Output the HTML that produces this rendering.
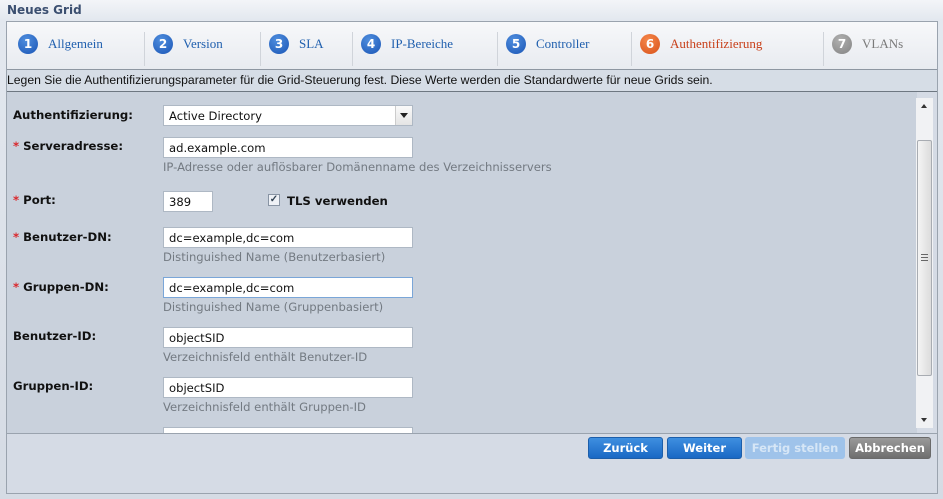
<!DOCTYPE html>
<html><head><meta charset="utf-8"><style>
*{box-sizing:border-box;margin:0;padding:0}
body{width:943px;height:499px;overflow:hidden;background:linear-gradient(#f3f5f8,#e3e8ef 20px,#d5dbe4);font-family:"Liberation Sans",sans-serif;position:relative}
.abs{position:absolute}
.title{left:7px;top:3px;font:bold 12px "DejaVu Sans",sans-serif;color:#3b4f70}
.panel{left:6px;top:21px;width:932px;height:473px;border:1px solid #9aa3ae;background:#d5dbe5}
.tabs{left:7px;top:22px;width:930px;height:48px;background:linear-gradient(#f7f8fa,#e8ebf0);border-bottom:1px solid #8d96a1}
.tab{position:absolute;top:12px;height:20px;font:13px "Liberation Serif",serif;color:#1f5fae;line-height:20px}
.num{position:absolute;top:12px;width:20px;height:20px;border-radius:50%;background:radial-gradient(circle at 40% 30%,#4f8ede,#1a55b5);color:#fff;font:bold 12px "DejaVu Sans",sans-serif;text-align:center;line-height:20px}
.sep{position:absolute;top:10px;width:1px;height:34px;background:#d0d4da}
.desc{left:7px;top:70px;width:930px;height:22px;background:#d6dde6;border-bottom:1px solid #6e7781;font-size:12.2px;line-height:20px;padding-left:0;color:#111;white-space:nowrap}
.form{left:7px;top:92px;width:910px;height:341px;background:#c9d1dc;overflow:hidden}
.lbl{position:absolute;left:6px;font:bold 11.7px "DejaVu Sans",sans-serif;color:#111;white-space:nowrap}
.lbl b{color:#d9262b;margin-right:4px}
.inp{position:absolute;left:156px;width:250px;height:21px;background:#fff;border:1px solid #aeb8c4;font:11.6px "DejaVu Sans",sans-serif;padding:3px 5px;color:#111}
.hint{position:absolute;left:156px;font:11.6px "DejaVu Sans",sans-serif;color:#737a82;white-space:nowrap}
.sb{left:916px;top:98px;width:17px;height:330px;background:#f1f2f4}
.btn{position:absolute;top:437px;height:22px;border-radius:3px;font:bold 11.5px "DejaVu Sans",sans-serif;color:#fff;text-align:center;line-height:21px;background:linear-gradient(#3e8fe0,#1a68c4);border:1px solid #1c5eaa;white-space:nowrap}
</style></head><body>
<div class="abs title">Neues Grid</div>
<div class="abs panel"></div>
<div class="abs tabs">
<div class="num" style="left:11px">1</div><div class="tab" style="left:41px">Allgemein</div><div class="sep" style="left:137px"></div>
<div class="num" style="left:146px">2</div><div class="tab" style="left:176px">Version</div><div class="sep" style="left:253px"></div>
<div class="num" style="left:262px">3</div><div class="tab" style="left:292px">SLA</div><div class="sep" style="left:345px"></div>
<div class="num" style="left:354px">4</div><div class="tab" style="left:384px">IP-Bereiche</div><div class="sep" style="left:490px"></div>
<div class="num" style="left:499px">5</div><div class="tab" style="left:529px">Controller</div><div class="sep" style="left:624px"></div>
<div class="num" style="left:633px;background:radial-gradient(circle at 40% 30%,#f5874a,#d8521a)">6</div><div class="tab" style="left:663px;color:#c8401a">Authentifizierung</div><div class="sep" style="left:816px"></div>
<div class="num" style="left:825px;background:radial-gradient(circle at 40% 30%,#b0b0b0,#838383)">7</div><div class="tab" style="left:855px;color:#7a7a7a">VLANs</div>
</div>
<div class="abs desc">Legen Sie die Authentifizierungsparameter für die Grid-Steuerung fest. Diese Werte werden die Standardwerte für neue Grids sein.</div>
<div class="abs form">
<div class="lbl" style="top:16px">Authentifizierung:</div>
<div class="inp" style="top:13px;height:21px">Active Directory</div>
<div style="position:absolute;left:388px;top:14px;width:17px;height:19px;background:linear-gradient(#fafafa,#e4e4e4);border-left:1px solid #ccc"><div style="position:absolute;left:4px;top:7px;border:4px solid transparent;border-top:5px solid #222"></div></div>
<div class="lbl" style="top:47px"><b>*</b>Serveradresse:</div>
<div class="inp" style="top:45px">ad.example.com</div>
<div class="hint" style="top:68px">IP-Adresse oder auflösbarer Domänenname des Verzeichnisservers</div>
<div class="lbl" style="top:101px"><b>*</b>Port:</div>
<div class="inp" style="top:99px;width:50px">389</div>
<div style="position:absolute;left:261px;top:102px;width:12px;height:12px;border:1px solid #8894a4;background:#eef1f6;font:bold 10px sans-serif;color:#345;line-height:10px;text-align:center">✓</div>
<div class="lbl" style="left:280px;top:102px">TLS verwenden</div>
<div class="lbl" style="top:138px"><b>*</b>Benutzer-DN:</div>
<div class="inp" style="top:135px">dc=example,dc=com</div>
<div class="hint" style="top:158px">Distinguished Name (Benutzerbasiert)</div>
<div class="lbl" style="top:188px"><b>*</b>Gruppen-DN:</div>
<div class="inp" style="top:185px;border-color:#7aa6d8">dc=example,dc=com</div>
<div class="hint" style="top:208px">Distinguished Name (Gruppenbasiert)</div>
<div class="lbl" style="top:237px">Benutzer-ID:</div>
<div class="inp" style="top:235px">objectSID</div>
<div class="hint" style="top:258px">Verzeichnisfeld enthält Benutzer-ID</div>
<div class="lbl" style="top:287px">Gruppen-ID:</div>
<div class="inp" style="top:285px">objectSID</div>
<div class="hint" style="top:308px">Verzeichnisfeld enthält Gruppen-ID</div>
<div class="inp" style="top:335px"></div>
</div>
<div class="abs" style="left:7px;top:433px;width:930px;height:1px;background:#9aa3ae"></div>
<div class="abs sb">
<div style="position:absolute;left:5px;top:6px;border:3px solid transparent;border-bottom:4px solid #333;border-top:0"></div>
<div style="position:absolute;left:1px;top:42px;width:15px;height:236px;border:1px solid #a8acb2;border-radius:2px;background:linear-gradient(90deg,#f4f4f4,#dcdcdc)"></div>
<div style="position:absolute;left:5px;top:156px;width:7px;height:7px;border-top:1px solid #666;border-bottom:1px solid #666;background:linear-gradient(transparent 2px,#666 2px,#666 3px,transparent 3px)"></div>
<div style="position:absolute;left:5px;top:320px;border:3px solid transparent;border-top:4px solid #333;border-bottom:0"></div>
</div>
<div class="btn" style="left:588px;width:75px">Zurück</div>
<div class="btn" style="left:667px;width:75px">Weiter</div>
<div class="btn" style="left:745px;width:100px;background:#9fc3ea;border-color:#9fc3ea;color:#d6e6f6">Fertig stellen</div>
<div class="btn" style="left:849px;width:82px;background:linear-gradient(#9a9a9a,#6e6e6e);border-color:#6a6a6a">Abbrechen</div>
</body></html>
